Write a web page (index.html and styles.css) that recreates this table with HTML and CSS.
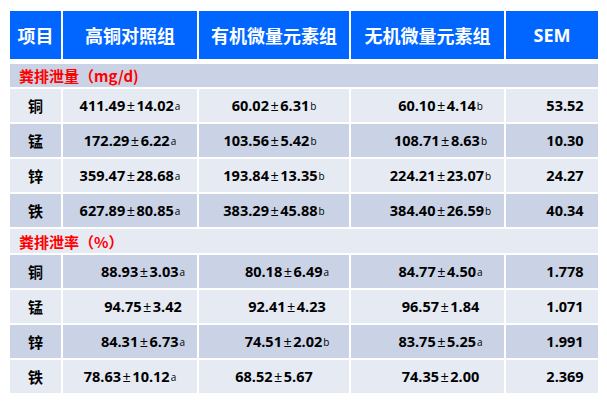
FILE: index.html
```html
<!DOCTYPE html>
<html lang="zh">
<head>
<meta charset="utf-8">
<link rel="stylesheet" href="styles.css">
</head>
<body>
<div class="tbl">
  <div class="hd">项目</div>
  <div class="hd">高铜对照组</div>
  <div class="hd">有机微量元素组</div>
  <div class="hd">无机微量元素组</div>
  <div class="hd sem">SEM</div>

  <div class="sec dark s1">粪排泄量（mg/d)</div>

  <div class="c light el">铜</div>
  <div class="c light">411.49<span class="pm">±</span>14.02<sup>a</sup></div>
  <div class="c light">60.02<span class="pm">±</span>6.31<sup>b</sup></div>
  <div class="c light sh">60.10<span class="pm">±</span>4.14<sup>b</sup></div>
  <div class="c light sh">53.52</div>

  <div class="c dark el">锰</div>
  <div class="c dark">172.29<span class="pm">±</span>6.22<sup>a</sup></div>
  <div class="c dark lf">103.56<span class="pm">±</span>5.42<sup>b</sup></div>
  <div class="c dark sh">108.71<span class="pm">±</span>8.63<sup>b</sup></div>
  <div class="c dark sh">10.30</div>

  <div class="c light el">锌</div>
  <div class="c light">359.47<span class="pm">±</span>28.68<sup>a</sup></div>
  <div class="c light">193.84<span class="pm">±</span>13.35<sup>b</sup></div>
  <div class="c light sh">224.21<span class="pm">±</span>23.07<sup>b</sup></div>
  <div class="c light sh">24.27</div>

  <div class="c dark el">铁</div>
  <div class="c dark">627.89<span class="pm">±</span>80.85<sup>a</sup></div>
  <div class="c dark">383.29<span class="pm">±</span>45.88<sup>b</sup></div>
  <div class="c dark sh">384.40<span class="pm">±</span>26.59<sup>b</sup></div>
  <div class="c dark sh">40.34</div>

  <div class="sec light s2">粪排泄率（%）</div>

  <div class="c dark el">铜</div>
  <div class="c dark sh">88.93<span class="pm">±</span>3.03<sup>a</sup></div>
  <div class="c dark sh">80.18<span class="pm">±</span>6.49<sup>a</sup></div>
  <div class="c dark sh">84.77<span class="pm">±</span>4.50<sup>a</sup></div>
  <div class="c dark sh">1.778</div>

  <div class="c light el">锰</div>
  <div class="c light sh">94.75<span class="pm">±</span>3.42</div>
  <div class="c light sh">92.41<span class="pm">±</span>4.23</div>
  <div class="c light sh">96.57<span class="pm">±</span>1.84</div>
  <div class="c light sh">1.071</div>

  <div class="c dark el">锌</div>
  <div class="c dark sh">84.31<span class="pm">±</span>6.73<sup>a</sup></div>
  <div class="c dark sh">74.51<span class="pm">±</span>2.02<sup>b</sup></div>
  <div class="c dark sh">83.75<span class="pm">±</span>5.25<sup>a</sup></div>
  <div class="c dark sh">1.991</div>

  <div class="c light el">铁</div>
  <div class="c light">78.63<span class="pm">±</span>10.12<sup>a</sup></div>
  <div class="c light">68.52<span class="pm">±</span>5.67</div>
  <div class="c light sh">74.35<span class="pm">±</span>2.00</div>
  <div class="c light sh">2.369</div>
</div>
</body>
</html>
```

FILE: styles.css
```css
html, body {
  margin: 0;
  background: #ffffff;
}
body {
  padding: 11px 10px;
  font-family: "Open Sans", "Noto Sans CJK SC", sans-serif;
  color: #000000;
}
.tbl {
  display: grid;
  grid-template-columns: 51px 134px 150px 153px 92px;
  gap: 2px;
}
.hd {
  height: 48px;
  margin-bottom: 3px;
  background: #0066ff;
  color: #ffffff;
  font-family: "Noto Sans CJK SC", sans-serif;
  font-weight: 700;
  font-size: 18px;
  display: flex;
  align-items: center;
  justify-content: center;
}
.hd.sem {
  font-family: "Open Sans", sans-serif;
}
.sec {
  grid-column: 1 / -1;
  display: flex;
  align-items: center;
  padding-left: 9px;
  color: #ff0000;
  font-family: "Noto Sans CJK SC", sans-serif;
  font-weight: 700;
  font-size: 15px;
}
.s1 { height: 23px; }
.s2 { height: 24px; }
.dark { background: #cad3e6; }
.light { background: #e6eaf3; }
.c {
  height: 33px;
  display: flex;
  align-items: center;
  justify-content: center;
  font-weight: 700;
  font-size: 14.5px;
  white-space: nowrap;
}
.c.el {
  font-family: "Noto Sans CJK SC", sans-serif;
  font-size: 15px;
}
.pm {
  font-weight: 400;
  margin: 0 1.5px;
}
.sh { padding-left: 26px; }
.lf { padding-right: 8px; }
sup {
  font-size: 10px;
  font-weight: 400;
  vertical-align: 4px;
  line-height: 0;
  margin-left: 1px;
}
```
